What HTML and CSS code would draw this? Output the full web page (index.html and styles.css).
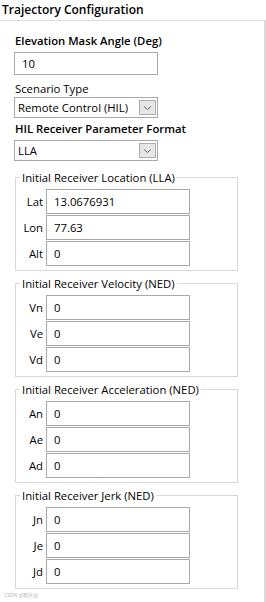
FILE: index.html
```html
<!DOCTYPE html>
<html lang="en">
<head>
    <meta charset="UTF-8">
    <meta name="viewport" content="width=device-width, initial-scale=1.0">
    <title>Trajectory Configuration</title>
    <link rel="stylesheet" href="styles.css">
</head>
<body>
    <div class="title">Trajectory Configuration</div>

    <div class="panel">
        <div class="caption strong first">Elevation Mask Angle (Deg)</div>
        <input type="text" class="textbox" value="10">

        <div class="caption scenario">Scenario Type</div>
        <div class="combo">
            <span class="combo-text">Remote Control (HIL)</span>
            <span class="combo-btn">
                <svg width="9" height="6" viewBox="0 0 9 6"><path d="M1 1.5 L4.5 4.5 L8 1.5" fill="none" stroke="#6d6d6d" stroke-width="1"/></svg>
            </span>
        </div>

        <div class="caption strong format">HIL Receiver Parameter Format</div>
        <div class="combo">
            <span class="combo-text">LLA</span>
            <span class="combo-btn">
                <svg width="9" height="6" viewBox="0 0 9 6"><path d="M1 1.5 L4.5 4.5 L8 1.5" fill="none" stroke="#6d6d6d" stroke-width="1"/></svg>
            </span>
        </div>

        <fieldset class="group first-group">
            <legend>Initial Receiver Location (LLA)</legend>
            <div class="row"><label>Lat</label><input type="text" value="13.0676931"></div>
            <div class="row"><label>Lon</label><input type="text" value="77.63"></div>
            <div class="row"><label>Alt</label><input type="text" value="0"></div>
        </fieldset>

        <fieldset class="group">
            <legend>Initial Receiver Velocity (NED)</legend>
            <div class="row"><label>Vn</label><input type="text" value="0"></div>
            <div class="row"><label>Ve</label><input type="text" value="0"></div>
            <div class="row"><label>Vd</label><input type="text" value="0"></div>
        </fieldset>

        <fieldset class="group">
            <legend>Initial Receiver Acceleration (NED)</legend>
            <div class="row"><label>An</label><input type="text" value="0"></div>
            <div class="row"><label>Ae</label><input type="text" value="0"></div>
            <div class="row"><label>Ad</label><input type="text" value="0"></div>
        </fieldset>

        <fieldset class="group">
            <legend>Initial Receiver Jerk (NED)</legend>
            <div class="row"><label>Jn</label><input type="text" value="0"></div>
            <div class="row"><label>Je</label><input type="text" value="0"></div>
            <div class="row"><label>Jd</label><input type="text" value="0"></div>
        </fieldset>

        <div class="mark">CSDN @程序员</div>
    </div>
</body>
</html>
```

FILE: styles.css
```css
body {
    font-family: "Open Sans", "Noto Sans", "Noto Sans CJK SC", sans-serif;
    font-size: 11.3px;
    color: #000;
    background: #fff;
    margin: 0;
    padding: 2px 0 0 0;
    overflow: hidden;
}
.title {
    font-size: 12px;
    font-weight: 600;
    line-height: 16px;
    padding-left: 2px;
    margin-bottom: 2px;
}
.panel {
    border-top: 1px solid #dcdcdc;
    border-right: 2px solid #dadada;
    padding: 12px 0 0 14px;
    width: 250px;
    height: 569px;
}
.caption {
    line-height: 15px;
    padding-left: 1px;
}
.strong {
    font-weight: 600;
}
.first {
    margin-bottom: 4px;
}
.scenario {
    margin-top: 6px;
    margin-bottom: 1px;
}
.format {
    margin-top: 3px;
    margin-bottom: 4px;
}
input {
    font-family: inherit;
    font-size: 11.3px;
    color: #000;
    box-sizing: border-box;
    border: 1px solid #a9a9a9;
    border-radius: 0;
    padding: 0 0 0 7px;
    margin: 0;
    outline: none;
    display: block;
}
.textbox {
    width: 144px;
    height: 23px;
}
.combo {
    box-sizing: border-box;
    width: 144px;
    height: 21px;
    border: 1px solid #a9a9a9;
    display: flex;
    align-items: center;
    justify-content: space-between;
    padding: 0 1px 0 3px;
}
.combo-btn {
    box-sizing: border-box;
    width: 17px;
    height: 15px;
    background: #e6e6e6;
    border: 1px solid #adadad;
    display: flex;
    align-items: center;
    justify-content: center;
}
.group {
    box-sizing: border-box;
    width: 223px;
    margin: 5px 0 0 1px;
    padding: 4px 0 4px 0;
    border: 1px solid #d9d9d9;
    display: flex;
    flex-direction: column;
    gap: 1px;
}
.first-group {
    margin-top: 9px;
}
legend {
    line-height: 15px;
    padding: 0 2px;
    margin-left: 4px;
}
.row {
    display: flex;
    align-items: center;
}
.row label {
    width: 30px;
    box-sizing: border-box;
    text-align: right;
    padding-right: 3px;
}
.row input {
    width: 144px;
    height: 25px;
}
.mark {
    font-size: 5px;
    line-height: 6px;
    color: #b5b5b5;
    margin: 3px 0 0 -10px;
}
```
